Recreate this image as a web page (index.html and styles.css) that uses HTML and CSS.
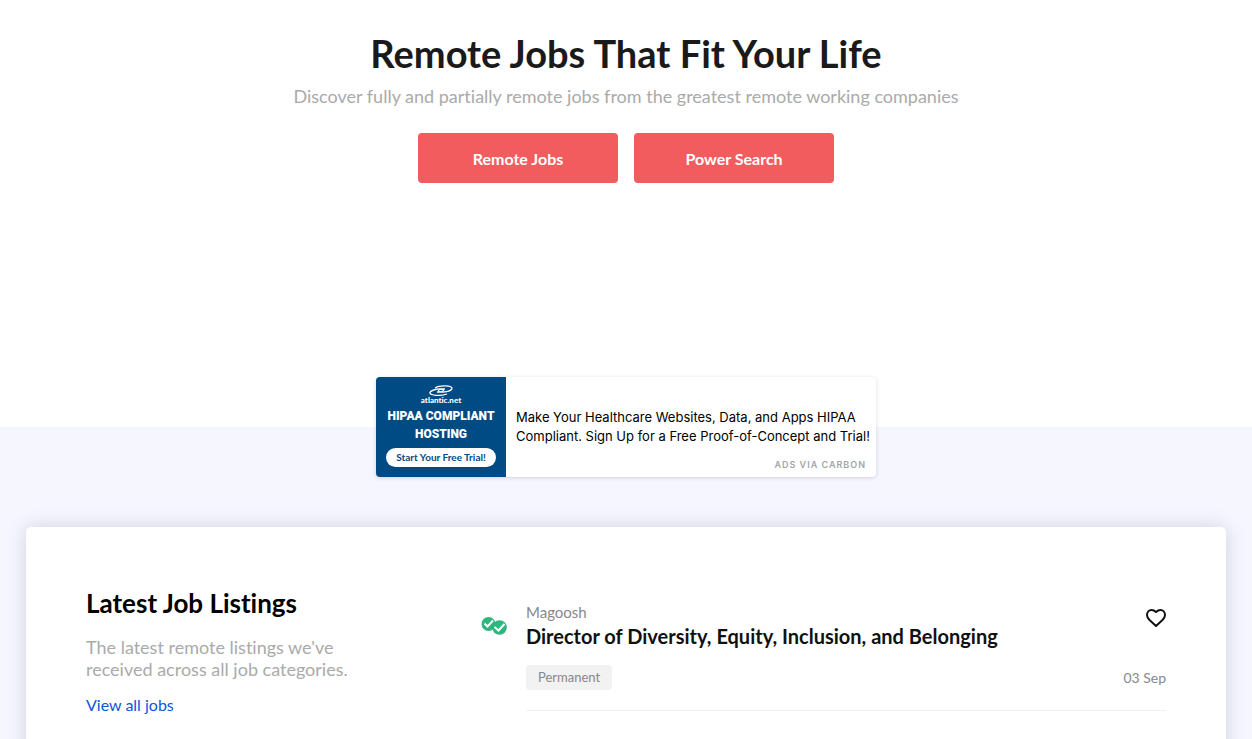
FILE: index.html
```html
<!DOCTYPE html>
<html lang="en">
<head>
    <meta charset="UTF-8">
    <meta name="viewport" content="width=device-width, initial-scale=1.0">
    <title>Remote Jobs</title>
    <link rel="stylesheet" href="styles.css">
</head>
<body>
    <!-- Hero -->
    <header class="hero">
        <h1>Remote Jobs That Fit Your Life</h1>
        <p>Discover fully and partially remote jobs from the greatest remote working companies</p>
        <div class="hero-buttons">
            <button type="button" class="btn">Remote Jobs</button>
            <button type="button" class="btn">Power Search</button>
        </div>
    </header>

    <main>
        <!-- Ad -->
        <aside class="ad">
            <a href="#" class="ad-banner">
                <svg class="ad-logo" viewBox="0 0 28 11" fill="none" stroke="#fff" aria-hidden="true">
                    <path d="M8 3C12 0 26 0 25 3.500C24 6.500 16 8 12 6.500C10 5 14 3.500 18 4" stroke-width="1.300"/>
                    <path d="M20 9C15 11 2 11 3 7.500C4 5 12 3 16 4.500C18 6 14 7.500 10 7" stroke-width="1.300"/>
                </svg>
                <span class="ad-brand">atlantic.net</span>
                <span class="ad-title">HIPAA COMPLIANT<br>HOSTING</span>
                <span class="ad-pill">Start Your Free Trial!</span>
            </a>
            <div class="ad-body">
                <a href="#" class="ad-text">Make Your Healthcare Websites, Data, and Apps HIPAA Compliant. Sign Up for a Free Proof-of-Concept and Trial!</a>
                <a href="#" class="ad-via">ADS VIA CARBON</a>
            </div>
        </aside>

        <!-- Listings -->
        <section class="card">
            <div class="intro">
                <h2>Latest Job Listings</h2>
                <p>The latest remote listings we've received across all job categories.</p>
                <a href="#">View all jobs</a>
            </div>
            <article class="job">
                <svg class="job-logo" viewBox="0 0 26 20" aria-hidden="true">
                    <circle cx="7.500" cy="8" r="7" fill="#2db67d"/>
                    <path d="M3.500 7.500l3 3 5.500-6" fill="none" stroke="#fff" stroke-width="2"/>
                    <circle cx="18.500" cy="11.500" r="7.300" fill="#2db67d"/>
                    <path d="M13.500 11l4 3.500 6-6.500" fill="none" stroke="#fff" stroke-width="2"/>
                </svg>
                <div class="job-info">
                    <div class="job-top">
                        <div>
                            <span class="company">Magoosh</span>
                            <h3>Director of Diversity, Equity, Inclusion, and Belonging</h3>
                        </div>
                        <button type="button" class="like" aria-label="Save job">
                            <svg viewBox="0 0 20 18" fill="none" stroke="#111" stroke-width="2" stroke-linejoin="round">
                                <path d="M10 3C8 1 7 1 5.500 1C3 1 1 3 1 6C1 8 2 9.500 3.500 11L10 17L16.500 11C18 9.500 19 8 19 6C19 3 17 1 14.500 1C13 1 12 1 10 3Z"/>
                            </svg>
                        </button>
                    </div>
                    <div class="job-bottom">
                        <span class="tag">Permanent</span>
                        <time datetime="09-03">03 Sep</time>
                    </div>
                </div>
            </article>
        </section>
    </main>
</body>
</html>
```
FILE: styles.css
```css
body {
    margin: 0;
    background-color: #f5f6ff;
    font-family: Lato, "Liberation Sans", sans-serif;
    font-variant-ligatures: none;
    color: #1a1a1a;
}

h1, h2, h3, p {
    margin: 0;
}

a {
    text-decoration: none;
}

/* Hero */
.hero {
    background-color: #fff;
    text-align: center;
    padding: 28px 24px 244px;
}

.hero h1 {
    font-size: 38px;
    line-height: 50px;
    font-weight: 700;
}

.hero p {
    margin-top: 6px;
    font-size: 18px;
    line-height: 24px;
    color: #aaa;
}

.hero-buttons {
    display: flex;
    justify-content: center;
    gap: 16px;
    margin-top: 25px;
}

.btn {
    width: 200px;
    height: 50px;
    border: none;
    border-radius: 4px;
    background-color: #f25c5f;
    color: #fff;
    font-family: inherit;
    font-size: 16px;
    font-weight: 700;
    cursor: pointer;
}

/* Ad */
.ad {
    display: flex;
    max-width: 500px;
    height: 100px;
    margin: -50px auto 50px;
    border-radius: 4px;
    overflow: hidden;
    background-color: #fff;
    box-shadow: 0 1px 4px rgba(0, 0, 0, 0.15);
    position: relative;
}

.ad-banner {
    display: flex;
    flex-direction: column;
    align-items: center;
    box-sizing: border-box;
    width: 130px;
    flex-shrink: 0;
    padding: 8px 0;
    background-color: #004b83;
    color: #fff;
    text-align: center;
}

.ad-logo {
    width: 28px;
    height: 11px;
    flex-shrink: 0;
}

.ad-brand {
    font-size: 8px;
    line-height: 8px;
    font-weight: 900;
}

.ad-title {
    margin-top: 3px;
    font-family: Roboto, sans-serif;
    font-size: 12px;
    line-height: 18px;
    font-weight: 900;
    white-space: nowrap;
}

.ad-pill {
    width: 110px;
    margin-top: 5px;
    border-radius: 10px;
    background-color: #fff;
    color: #004b83;
    font-size: 10px;
    line-height: 19px;
    font-weight: 700;
}

.ad-body {
    display: flex;
    flex-direction: column;
    flex: 1;
    padding: 31px 0 6px 10px;
    font-family: Inter, sans-serif;
}

.ad-text {
    font-size: 13px;
    line-height: 19px;
    color: #000;
}

.ad-via {
    margin: auto 10px 0 0;
    align-self: flex-end;
    font-size: 9px;
    line-height: 12px;
    font-weight: 600;
    letter-spacing: 1px;
    color: #a5a5a5;
}

/* Listings card */
.card {
    display: grid;
    grid-template-columns: 335px 1fr;
    align-items: start;
    gap: 60px;
    box-sizing: border-box;
    max-width: 1200px;
    margin: 0 auto;
    padding: 60px;
    border-radius: 5px;
    background-color: #fff;
    box-shadow: 0 0 20px rgba(0, 0, 0, 0.15);
}

.intro h2 {
    font-size: 26px;
    line-height: 32px;
    color: #000;
}

.intro p {
    max-width: 280px;
    margin-top: 17px;
    font-size: 18px;
    line-height: 22px;
    color: #aaa;
}

.intro a {
    display: inline-block;
    margin-top: 14px;
    font-size: 16px;
    line-height: 22px;
    color: #0d55dd;
}

.job {
    display: flex;
    gap: 19px;
    padding-top: 14px;
}

.job-logo {
    width: 26px;
    height: 20px;
    margin-top: 15px;
    flex-shrink: 0;
}

.job-info {
    flex: 1;
    padding-bottom: 20px;
    border-bottom: 1px solid #f0f0f0;
}

.job-top,
.job-bottom {
    display: flex;
    justify-content: space-between;
}

.company {
    display: block;
    font-size: 15px;
    line-height: 22px;
    color: #888;
}

.job h3 {
    font-size: 20px;
    line-height: 26px;
    color: #111;
}

.like {
    align-self: flex-start;
    width: 20px;
    height: 18px;
    margin-top: 8px;
    padding: 0;
    border: none;
    background: none;
    cursor: pointer;
}

.like svg {
    display: block;
    width: 20px;
    height: 18px;
}

.job-bottom {
    align-items: center;
    margin-top: 16px;
}

.tag {
    padding: 0 12px;
    border-radius: 4px;
    background-color: #f2f2f2;
    font-size: 13px;
    line-height: 25px;
    color: #888;
}

time {
    font-size: 14px;
    line-height: 20px;
    color: #888;
}

@media (max-width: 900px) {
    .card {
        grid-template-columns: 1fr;
        gap: 30px;
        padding: 30px;
    }
}
```
